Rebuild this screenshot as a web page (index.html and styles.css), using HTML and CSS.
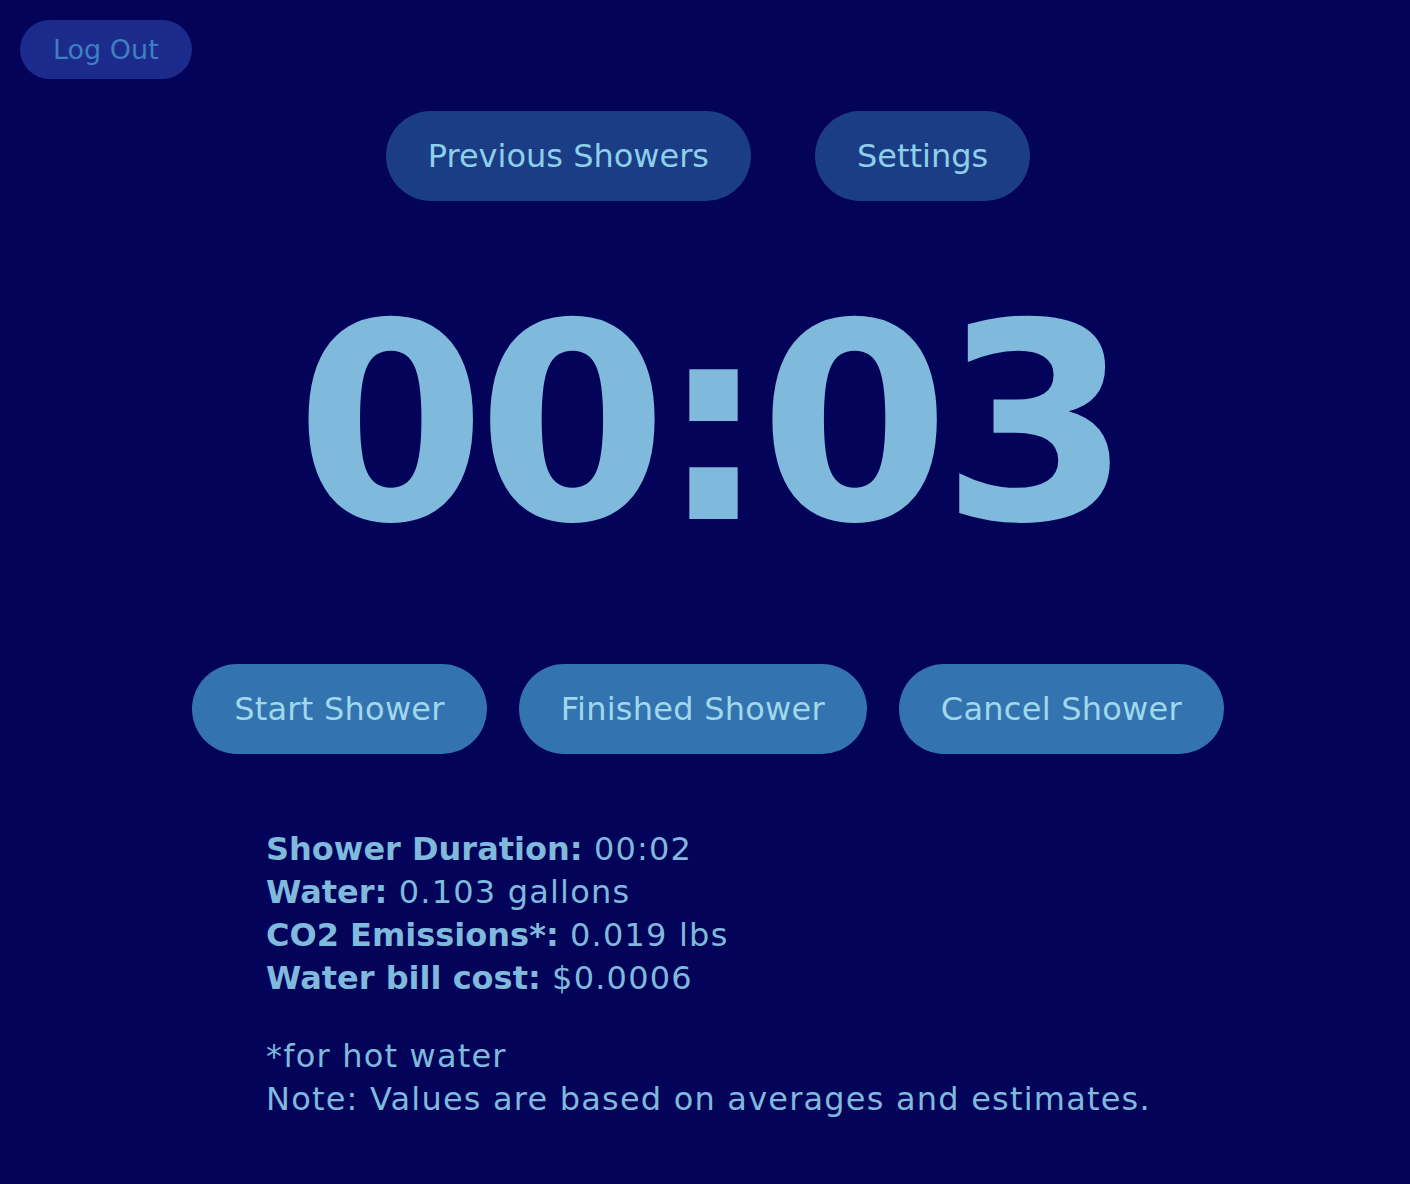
FILE: index.html
```html
<!DOCTYPE html>
<html lang="en">
<head>
<meta charset="utf-8">
<title>Shower Timer</title>
<link rel="stylesheet" href="styles.css">
</head>
<body>
<div class="page">
  <div class="topbar">
    <button class="btn btn-logout">Log Out</button>
  </div>
  <nav class="nav">
    <button class="btn btn-nav">Previous Showers</button>
    <button class="btn btn-nav">Settings</button>
  </nav>
  <div class="timer">00:03</div>
  <div class="actions">
    <button class="btn btn-action">Start Shower</button>
    <button class="btn btn-action">Finished Shower</button>
    <button class="btn btn-action">Cancel Shower</button>
  </div>
  <section class="stats">
    <p class="stat-lines">
      <span><b>Shower Duration:</b> 00:02</span>
      <span><b>Water:</b> 0.103 gallons</span>
      <span><b>CO2 Emissions*:</b> 0.019 lbs</span>
      <span><b>Water bill cost:</b> $0.0006</span>
    </p>
    <p class="stat-lines">
      <span>*for hot water</span>
      <span>Note: Values are based on averages and estimates.</span>
    </p>
  </section>
</div>
</body>
</html>
```
FILE: styles.css
```css
html, body {
  margin: 0;
  padding: 0;
  background: #03035a;
}
body {
  font-family: "DejaVu Sans", "Open Sans", sans-serif;
  color: #7fb9dc;
  width: 1410px;
  height: 1184px;
  overflow: hidden;
}
.page {
  display: flex;
  flex-direction: column;
}
.topbar {
  padding: 20px 0 0 20px;
  display: flex;
}
.btn {
  border: none;
  border-radius: 999px;
  font-family: "DejaVu Sans", "Open Sans", sans-serif;
  cursor: pointer;
  letter-spacing: 0;
}
.btn-logout {
  background: #1c2b8b;
  color: #3e7fc4;
  height: 59px;
  padding: 0 33px;
  font-size: 27px;
}
.nav {
  display: flex;
  justify-content: center;
  gap: 64px;
  margin-top: 32px;
  padding-left: 6px;
}
.btn-nav {
  background: #1a3d86;
  color: #8ecfe9;
  height: 90px;
  padding: 0 42px;
  font-size: 32px;
}
.timer {
  text-align: center;
  font-weight: bold;
  font-size: 274px;
  line-height: 1;
  letter-spacing: -9px;
  margin-top: 87px;
  padding-left: 8px;
  height: 274px;
  color: #7fb9dc;
}
.actions {
  display: flex;
  justify-content: center;
  gap: 32px;
  margin-top: 102px;
  padding-left: 6px;
}
.btn-action {
  background: #3373b0;
  color: #a0d8ec;
  height: 90px;
  padding: 0 42px;
  font-size: 32px;
  letter-spacing: 0.25px;
}
.stats {
  margin-top: 74px;
  padding-left: 266px;
}
.stat-lines {
  margin: 0 0 35px 0;
  display: flex;
  flex-direction: column;
  font-size: 32px;
  line-height: 43px;
  letter-spacing: 1.2px;
}
.stat-lines b {
  font-weight: bold;
  letter-spacing: 0;
}
```
